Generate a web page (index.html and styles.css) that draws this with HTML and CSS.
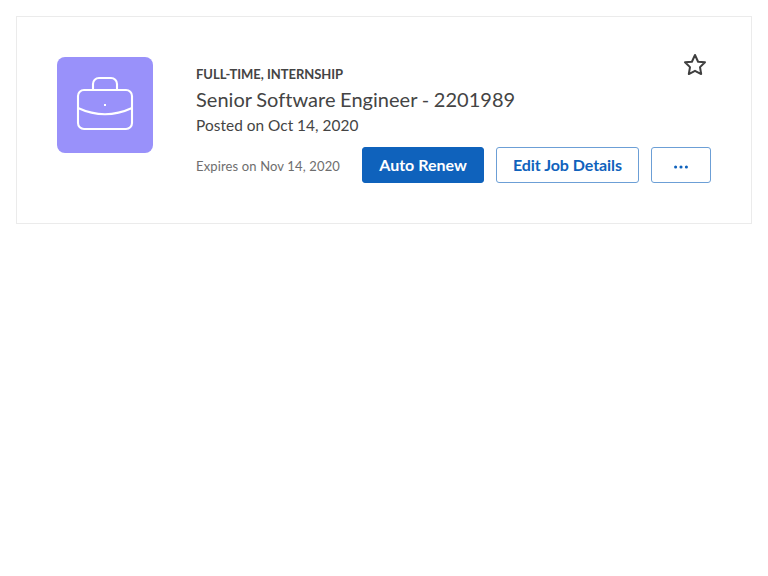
FILE: index.html
```html
<!DOCTYPE html>
<html lang="en">
<head>
<meta charset="utf-8">
<title>Job card</title>
<link rel="stylesheet" href="styles.css">
</head>
<body>
<article class="job-card">
  <div class="job-logo">
    <svg width="58" height="56" viewBox="0 0 58 56" fill="none" stroke="#fff" stroke-width="2.100">
      <rect x="2" y="14" width="54" height="39" rx="6"/>
      <path d="M17 14V8a6 6 0 0 1 6-6h12a6 6 0 0 1 6 6v6M2 32Q29 44.500 56 32"/>
      <rect x="28" y="28" width="2" height="2" fill="#fff" stroke="none"/>
    </svg>
  </div>
  <div class="job-body">
    <div class="job-top">
      <div class="job-info">
        <div class="job-type">FULL-TIME, INTERNSHIP</div>
        <h2 class="job-title">Senior Software Engineer - 2201989</h2>
        <div class="job-posted">Posted on Oct 14, 2020</div>
      </div>
      <button class="star" aria-label="Favorite">
        <svg width="24" height="24" viewBox="0 0 24 24" fill="none" stroke="#3f3f3f" stroke-width="2" stroke-linejoin="round"><path d="M12 2l3.090 6.760L22 9.270l-5 4.870 1.180 6.880L12 17.770l-6.180 3.250L7 14.140 2 9.270l6.910-.510z"/></svg>
      </button>
    </div>
    <div class="job-bottom">
      <span class="expires">Expires on Nov 14, 2020</span>
      <div class="actions">
        <button class="btn primary">Auto Renew</button>
        <button class="btn edit">Edit Job Details</button>
        <button class="btn more" aria-label="More"><svg width="14" height="4" viewBox="0 0 14 4" fill="#0f62bc"><circle cx="1.600" cy="2" r="1.550"/><circle cx="7" cy="2" r="1.550"/><circle cx="12.400" cy="2" r="1.550"/></svg></button>
      </div>
    </div>
  </div>
</article>
</body>
</html>
```
FILE: styles.css
```css
* { box-sizing: border-box; }
body { margin: 16px; background: #fff; font-family: Lato, sans-serif; color: #444; }
.job-card { display: flex; gap: 43px; height: 208px; padding: 40px; border: 1px solid #ebebeb; }
.job-logo { display: flex; flex: none; align-items: center; justify-content: center; width: 96px; height: 96px; padding-bottom: 2px; border-radius: 8px; background: #9991fa; }
.job-body { flex: 1; }
.job-top { display: flex; justify-content: space-between; height: 90px; }
.job-info { padding-top: 7px; }
.job-type { font-size: 13px; font-weight: 700; line-height: 20px; letter-spacing: -0.04px; }
.job-title { margin: 0; font-size: 20px; font-weight: 400; line-height: 30px; letter-spacing: 0.02px; word-spacing: -0.5px; }
.job-posted { font-size: 15.4px; line-height: 22px; letter-spacing: 0.07px; word-spacing: -0.2px; }
.star { width: 24px; height: 24px; margin: -4px 4px 0 0; padding: 0; border: 0; background: none; }
.star svg { display: block; }
.job-bottom { display: flex; align-items: center; justify-content: space-between; height: 36px; }
.expires { padding-top: 2px; font-size: 13px; line-height: 20px; letter-spacing: 0.14px; color: #6e6e6e; }
.actions { display: flex; gap: 12px; }
.btn { display: flex; align-items: center; justify-content: center; height: 36px; padding: 0; border: 1px solid #6c9fd6; border-radius: 3px; background: #fff; color: #0f62bc; font: 700 16px/24px Lato, sans-serif; }
.primary { width: 122px; border-color: #0f62bc; background: #0f62bc; color: #fff; }
.edit { width: 143px; letter-spacing: -0.05px; }
.more { width: 60px; }
.more svg { margin-top: 4px; }
```
